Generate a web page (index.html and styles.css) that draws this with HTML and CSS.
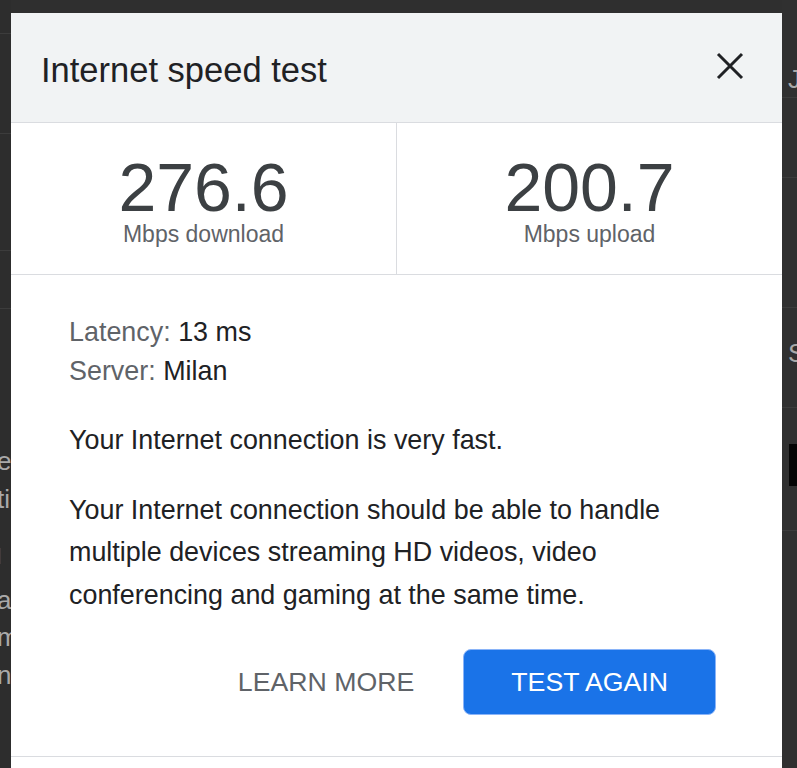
FILE: index.html
```html
<!DOCTYPE html>
<html lang="en">
<head>
<meta charset="utf-8">
<title>Internet speed test</title>
<link rel="stylesheet" href="styles.css">
</head>
<body>
<div class="page">
  <div class="side side-left">
    <div class="bg-row r1"></div>
    <div class="bg-row r2"></div>
    <div class="bg-row r3"></div>
    <div class="bg-row r4"></div>
    <div class="frag f1">e</div>
    <div class="frag f2">ti</div>
    <div class="frag f3 link">l</div>
    <div class="frag f4">a</div>
    <div class="frag f5">m</div>
    <div class="frag f6">n'</div>
  </div>

  <div class="dialog">
    <header class="dlg-head">
      <h1 class="title">Internet speed test</h1>
      <button class="close" aria-label="Close">
        <svg width="28" height="28" viewBox="0 0 28 28" aria-hidden="true">
          <path d="M2 2 L26 26 M26 2 L2 26" stroke="#202124" stroke-width="3" fill="none"/>
        </svg>
      </button>
    </header>

    <section class="stats">
      <div class="stat">
        <div class="num">276.6</div>
        <div class="unit">Mbps download</div>
      </div>
      <div class="stat">
        <div class="num">200.7</div>
        <div class="unit">Mbps upload</div>
      </div>
    </section>

    <section class="body">
      <div class="info">
        <div class="info-row"><span class="key">Latency:</span> 13 ms</div>
        <div class="info-row"><span class="key">Server:</span> Milan</div>
      </div>
      <p class="para">Your Internet connection is very fast.</p>
      <p class="para multi">Your Internet connection should be able to handle multiple devices streaming HD videos, video conferencing and gaming at the same time.</p>
      <div class="actions">
        <button class="btn-text">LEARN MORE</button>
        <button class="btn-primary">TEST AGAIN</button>
      </div>
    </section>

    <div class="dlg-foot"></div>
  </div>

  <div class="side side-right">
    <div class="rfrag j">J</div>
    <div class="bg-row rr1"></div>
    <div class="bg-row rr2"></div>
    <div class="bg-row rr3"></div>
    <div class="rfrag s">S</div>
    <div class="bg-row rr4"></div>
    <div class="black-box"></div>
    <div class="bg-row rr5"></div>
  </div>
</div>
</body>
</html>
```

FILE: styles.css
```css
* { box-sizing: border-box; }

html, body {
  margin: 0;
  padding: 0;
  height: 768px;
  overflow: hidden;
  background: #2f2f2f;
  font-family: "Liberation Sans", Arial, sans-serif;
}

.page {
  display: flex;
  width: 797px;
  height: 768px;
}

/* background strips behind the dialog */
.side {
  flex: none;
  overflow: hidden;
  height: 768px;
  white-space: nowrap;
  color: #a9a9a9;
  font-size: 26px;
}
.side-left { width: 11px; background: #2d2d2d; }
.side-right { flex: 1; background: #303030; }

.bg-row { border-bottom: 1px solid #3c3c3c; }
.r1 { height: 34px; }
.r2 { height: 100px; }
.r3 { height: 117px; }
.r4 { height: 58px; }

.frag {
  line-height: 30px;
  margin-left: -3px;
}
.f1 { margin-top: 137px; }
.f2 { margin-top: 8px; }
.f3 { margin-top: 28px; color: #4a4f7a; font-size: 22px; }
.f4 { margin-top: 13px; }
.f5 { margin-top: 7px; }
.f6 { margin-top: 8px; }

.rfrag { margin-left: 6px; line-height: 30px; }
.j { margin-top: 64px; }
.rr1 { height: 4px; }
.rr2 { height: 80px; }
.rr3 { height: 130px; }
.s { margin-top: 30px; }
.rr4 { height: 40px; }
.black-box {
  margin-top: 36px;
  margin-left: 7px;
  height: 42px;
  background: #050505;
}
.rr5 { height: 45px; }

/* dialog */
.dialog {
  flex: none;
  width: 771px;
  margin-top: 13px;
  background: #ffffff;
  display: flex;
  flex-direction: column;
  height: 755px;
}

.dlg-head {
  display: flex;
  align-items: flex-start;
  height: 110px;
  padding: 37px 38px 0 30px;
  background: #f1f3f4;
  border-bottom: 1px solid #dadce0;
}

.title {
  margin: 0;
  font-size: 34.5px;
  line-height: 40px;
  font-weight: 400;
  color: #202124;
}

.close {
  margin-left: auto;
  margin-top: 2px;
  padding: 0;
  border: 0;
  background: none;
  width: 28px;
  height: 28px;
  display: block;
}
.close svg { display: block; }

.stats {
  display: grid;
  grid-template-columns: 386px 385px;
  height: 152px;
  border-bottom: 1px solid #dadce0;
}
.stat {
  text-align: center;
  padding-top: 30px;
}
.stat:first-child { border-right: 1px solid #dadce0; }

.num {
  font-size: 68px;
  line-height: 68px;
  color: #3c4043;
}
.unit {
  font-size: 23px;
  line-height: 26px;
  color: #5f6368;
}

.body {
  padding: 38px 56px 0 58px;
  font-size: 26.9px;
  color: #202124;
}

.info-row { line-height: 39px; }
.key { color: #5f6368; }

.para {
  margin: 27.5px 0 0;
  line-height: 42.5px;
}

.actions {
  display: flex;
  justify-content: flex-end;
  align-items: center;
  gap: 24px;
  margin-top: 33px;
  margin-right: 10px;
  padding-bottom: 41px;
}

.btn-text, .btn-primary {
  font-family: "Liberation Sans", Arial, sans-serif;
  font-size: 26.7px;
  height: 66px;
  border-radius: 8px;
  cursor: pointer;
}
.btn-text {
  padding: 0 25px;
  border: 0;
  background: none;
  color: #5f6368;
}
.btn-primary {
  padding: 0 47px;
  background: #1a73e8;
  border: 1px solid #8ab4f8;
  color: #ffffff;
}

.dlg-foot {
  flex: 1;
  border-top: 1px solid #dadce0;
}
```
